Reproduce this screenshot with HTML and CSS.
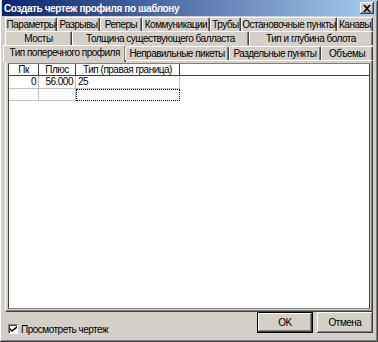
FILE: index.html
```html
<!DOCTYPE html>
<html>
  <head>
    <meta charset="utf-8" />
    <title>Создать чертеж профиля по шаблону</title>
    <link rel="stylesheet" href="styles.css">
  </head>
  <body>
    <div class="window">
      <div class="titlebar">
        <span class="title">Создать чертеж профиля по шаблону</span>
        <span class="close-btn">
          <svg width="8" height="7" viewBox="0 0 8 7">
            <path d="M0 0h2l2 2 2-2h2L5 3.5 8 7H6L4 5 2 7H0l3-3.5z" fill="#000" />
          </svg>
        </span>
      </div>

      <div class="tabs">
        <div class="tab-row">
          <div class="tab" style="width:52px">Параметры</div>
          <div class="tab" style="width:43px">Разрывы</div>
          <div class="tab" style="width:42px">Реперы</div>
          <div class="tab" style="width:68px">Коммуникации</div>
          <div class="tab" style="width:31px">Трубы</div>
          <div class="tab" style="width:96px">Остановочные пункты</div>
          <div class="tab" style="width:36px">Канавы</div>
        </div>
        <div class="tab-row">
          <div class="tab" style="width:67px">Мосты</div>
          <div class="tab" style="width:177px">Толщина существующего балласта</div>
          <div class="tab" style="width:124px">Тип и глубина болота</div>
        </div>
        <div class="tab-row front">
          <div class="tab active" style="width:121px">Тип поперечного профиля</div>
          <div class="tab" style="width:104px">Неправильные пикеты</div>
          <div class="tab" style="width:93px">Раздельные пункты</div>
          <div class="tab" style="width:52px">Объемы</div>
        </div>
      </div>

      <div class="panel">
        <div class="grid">
          <div class="grid-row header">
            <div class="cell head c1">Пк</div>
            <div class="cell head c2">Плюс</div>
            <div class="cell head c3">Тип (правая граница)</div>
          </div>
          <div class="grid-row">
            <div class="cell c1 num">0</div>
            <div class="cell c2 num">56.000</div>
            <div class="cell c3">25</div>
          </div>
          <div class="grid-row">
            <div class="cell c1"></div>
            <div class="cell c2"></div>
            <div class="cell c3 focus"></div>
          </div>
        </div>
      </div>

      <div class="footer">
        <label class="check">
          <span class="checkbox">
            <svg width="7" height="7" viewBox="0 0 7 7">
              <path d="M0 2l2 2 5-4v2L2 6 0 4z" fill="#000" />
            </svg>
          </span>
          Просмотреть чертеж
        </label>
        <div class="buttons">
          <button class="btn default">OK</button>
          <button class="btn">Отмена</button>
        </div>
      </div>
    </div>
  </body>
</html>
```

FILE: styles.css
```css
body {
  margin: 0;
  padding: 0;
  font-family: "Liberation Sans", Arial, sans-serif;
  font-size: 10px;
  letter-spacing: -0.5px;
  color: #000;
}

/* Window frame */
.window {
  width: 378px;
  height: 342px;
  box-sizing: border-box;
  padding: 0 2px 2px;
  background-color: #d4d0c8;
  box-shadow: inset -1px -1px #404040, inset 1px 1px #fff, inset -2px -2px #808080;
  display: flex;
  flex-direction: column;
}

.titlebar {
  height: 16px;
  flex: none;
  display: flex;
  align-items: center;
  justify-content: space-between;
  padding: 0 2px 0 2px;
  background: linear-gradient(to right, #0a246a, #a6caf0);
}

.title {
  color: #fff;
  font-weight: bold;
  font-size: 10px;
  letter-spacing: -0.4px;
}

.close-btn {
  width: 14px;
  height: 12px;
  box-sizing: border-box;
  background-color: #d4d0c8;
  box-shadow: inset -1px -1px #404040, inset 1px 1px #fff, inset -2px -2px #808080;
  display: flex;
  align-items: center;
  justify-content: center;
}

/* Tabs */
.tabs {
  padding: 1px 3px 0;
  flex: none;
}

.tab-row {
  display: flex;
  height: 14px;
}

.tab-row.front {
  height: 15px;
  align-items: flex-end;
  position: relative;
  z-index: 1;
}

.tab {
  box-sizing: border-box;
  height: 14px;
  line-height: 13px;
  text-align: center;
  white-space: nowrap;
  overflow: hidden;
  border-top: 1px solid #fff;
  border-left: 1px solid #fff;
  border-right: 1px solid #404040;
  box-shadow: inset -1px 0 #808080;
  border-radius: 2px 2px 0 0;
}

.tab.active {
  height: 17px;
  margin-left: -2px;
  margin-right: -1px;
  margin-bottom: -2px;
  width: 124px !important;
  background-color: #d4d0c8;
  line-height: 14px;
}

/* Tab page */
.panel {
  margin: 0 3px;
  height: 252px;
  flex: none;
  box-sizing: border-box;
  padding: 2px;
  border-top: 1px solid #fff;
  border-left: 1px solid #fff;
  border-right: 1px solid #404040;
  border-bottom: 1px solid #404040;
  box-shadow: inset -1px -1px #808080;
}

.grid {
  height: 100%;
  box-sizing: border-box;
  background-color: #fff;
  border-top: 1px solid #808080;
  border-left: 1px solid #404040;
  border-right: 1px solid #404040;
  border-bottom: 1px solid #808080;
}

.grid-row {
  display: flex;
}

.grid-row.header {
  border-bottom: 1px solid #404040;
}

.cell {
  box-sizing: border-box;
  height: 12px;
  line-height: 11px;
  padding: 0 2px;
  border-right: 1px solid #c0c0c0;
  border-bottom: 1px solid #c0c0c0;
  white-space: nowrap;
}

.grid-row:nth-child(2) .cell {
  height: 13px;
  line-height: 12px;
}

.cell.head {
  height: 11px;
  line-height: 11px;
  text-align: center;
  border-right: 1px solid #404040;
  border-bottom: none;
}

.c1 { width: 30px; }
.c2 { width: 37px; }
.c3 { width: 104px; }

.num {
  text-align: right;
}

.cell.focus {
  border: 1px dotted #000;
}

/* Footer */
.footer {
  flex: 1;
  display: flex;
  align-items: center;
  justify-content: space-between;
  padding: 0 3px 0 6px;
}

.check {
  display: flex;
  align-items: center;
  gap: 3px;
  margin-top: 6px;
}

.checkbox {
  width: 10px;
  height: 10px;
  box-sizing: border-box;
  background-color: #fff;
  border-top: 1px solid #808080;
  border-left: 1px solid #808080;
  border-right: 1px solid #fff;
  border-bottom: 1px solid #fff;
  box-shadow: inset 1px 1px #404040;
  display: flex;
  align-items: center;
  justify-content: center;
}

.buttons {
  display: flex;
  gap: 4px;
  margin-top: -8px;
}

.btn {
  width: 56px;
  height: 21px;
  padding: 0;
  font-family: inherit;
  font-size: 10px;
  letter-spacing: -0.5px;
  color: #000;
  background-color: #d4d0c8;
  border: none;
  box-shadow: inset -1px -1px #404040, inset 1px 1px #fff, inset -2px -2px #808080;
}

.btn.default {
  border: 1px solid #000;
}
```
